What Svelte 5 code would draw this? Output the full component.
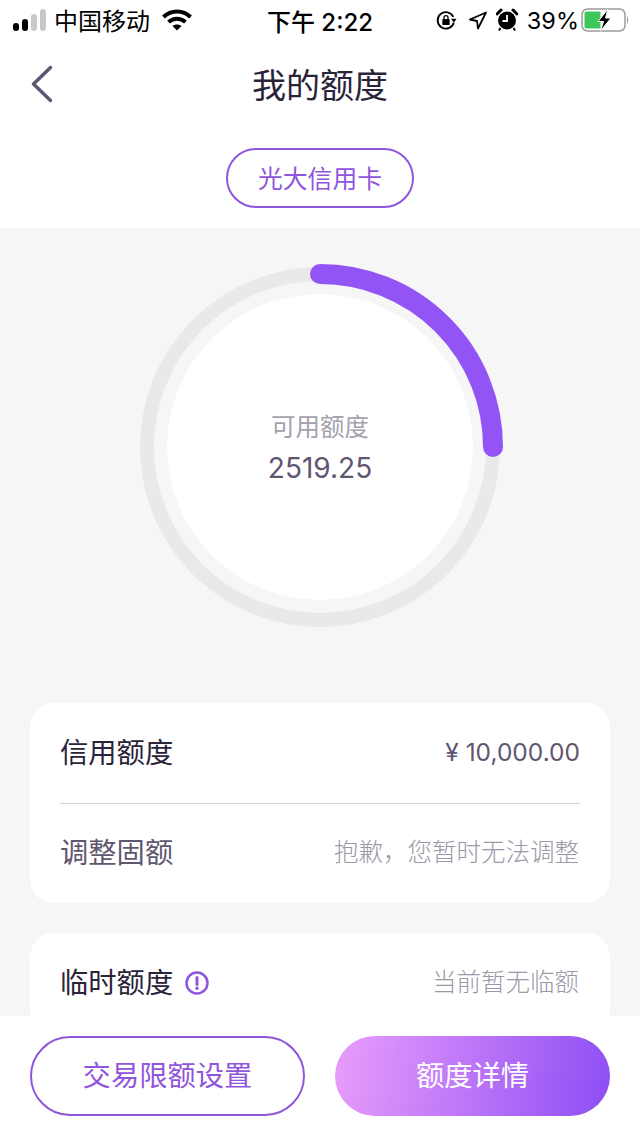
<script>
  let title = "我的额度";
  let cardName = "光大信用卡";
  let available = "2519.25";
</script>

<div class="page">
  <div class="statusbar">
    <div class="status-left">
      <div class="signal">
        <i class="on s1"></i><i class="on s2"></i><i class="s3"></i><i class="s4"></i>
      </div>
      <span class="carrier">中国移动</span>
      <svg class="wifi" width="30" height="24" viewBox="0 0 30 24">
        <path d="M1.500 9C9 1.500 21 1.500 28.500 9" fill="none" stroke="#000" stroke-width="4" />
        <path d="M6.500 14C11.500 9.500 18.500 9.500 23.500 14" fill="none" stroke="#000" stroke-width="4" />
        <path d="M10.500 18C13 16 17 16 19.500 18L15 22.500Z" fill="#000" />
      </svg>
    </div>
    <span class="time">下午 2:22</span>
    <div class="status-right">
      <svg class="lock" width="22" height="22" viewBox="0 0 24 24">
        <path d="M20 8.500A9 9 0 1 0 20.500 15" fill="none" stroke="#000" stroke-width="2" />
        <path d="M17.500 10.500L23.500 10.500L20.500 15Z" fill="#000" />
        <rect x="8" y="11" width="8" height="6.500" rx="1" fill="#000" />
        <path d="M9.800 11V9.500a2.200 2.200 0 0 1 4.400 0V11" fill="none" stroke="#000" stroke-width="1.400" />
      </svg>
      <svg width="20" height="20" viewBox="0 0 20 20">
        <path d="M18 2.500L10 18.500L9 11L2 9.500Z" fill="none" stroke="#000" stroke-width="1.800" stroke-linejoin="round" />
      </svg>
      <svg width="22" height="24" viewBox="0 0 22 24">
        <circle cx="11" cy="12.500" r="9" fill="#000" />
        <path d="M11 7V13H6.500" fill="none" stroke="#fff" stroke-width="1.800" />
        <path d="M1 6L5 2M21 6L17 2" stroke="#000" stroke-width="3" stroke-linecap="round" />
        <path d="M4.500 20L3 22.500M17.500 20L19 22.500" stroke="#000" stroke-width="2" />
      </svg>
      <span class="percent">39%</span>
      <svg class="battery" width="50" height="24" viewBox="0 0 50 24">
        <rect x="1" y="1" width="43" height="22" rx="5.500" fill="none" stroke="#9b9b9b" stroke-width="1.500" />
        <path d="M3.500 5.500a2 2 0 0 1 2-2h14v17h-14a2 2 0 0 1-2-2Z" fill="#3cc75a" />
        <path d="M46 8c1.500.5 1.500 7.500 0 8Z" fill="#9b9b9b" />
        <path d="M27 1L17 13.500H22.500L19.500 23L30 10H24.500Z" fill="#000" stroke="#fff" stroke-width="1" />
      </svg>
    </div>
  </div>

  <header class="nav">
    <svg class="back" width="24" height="40" viewBox="0 0 24 40">
      <path d="M20.500 3.500L3.500 20L20.500 36.500" fill="none" stroke="#5f566f" stroke-width="3.500" stroke-linecap="round" stroke-linejoin="round" />
    </svg>
    <h1>{title}</h1>
  </header>

  <div class="card-switch">
    <button class="pill">{cardName}</button>
  </div>

  <main class="content">
    <div class="gauge">
      <svg width="372" height="372" viewBox="0 0 372 372">
        <circle cx="186" cy="180" r="173" fill="none" stroke="#e9e9e9" stroke-width="14" />
        <circle cx="186" cy="180" r="153" fill="#fff" />
        <path d="M186 7A173 173 0 0 1 359 180" fill="none" stroke="#9254f5" stroke-width="20" stroke-linecap="round" />
      </svg>
      <div class="gauge-text">
        <span class="gauge-label">可用额度</span>
        <span class="gauge-value">{available}</span>
      </div>
    </div>

    <section class="card">
      <div class="row">
        <span class="name">信用额度</span>
        <span class="amount">¥ 10,000.00</span>
      </div>
      <div class="row">
        <span class="name muted">调整固额</span>
        <span class="note">抱歉，您暂时无法调整</span>
      </div>
    </section>

    <section class="card">
      <div class="row">
        <span class="name">
          临时额度
          <svg width="24" height="24" viewBox="0 0 24 24">
            <circle cx="12" cy="12" r="10.500" fill="none" stroke="#8f55dc" stroke-width="2.500" />
            <path d="M12 6.500V13.500" stroke="#8f55dc" stroke-width="3" stroke-linecap="round" />
            <circle cx="12" cy="17.300" r="1.700" fill="#8f55dc" />
          </svg>
        </span>
        <span class="note">当前暂无临额</span>
      </div>
    </section>
  </main>

  <footer class="actions">
    <button class="btn outline">交易限额设置</button>
    <button class="btn solid">额度详情</button>
  </footer>
</div>

<style>
  :global(body) {
    margin: 0;
    background: #fff;
  }

  .page {
    width: 640px;
    height: 1136px;
    display: flex;
    flex-direction: column;
    overflow: hidden;
    background: #fff;
    font-family: "Noto Sans CJK SC", "Noto Sans", sans-serif;
    color: #2a2438;
  }

  .statusbar {
    height: 40px;
    flex: none;
    position: relative;
    display: flex;
    align-items: center;
    justify-content: space-between;
    padding: 0 9px 0 13px;
    color: #000;
    font-size: 24px;
  }

  .status-left,
  .status-right {
    display: flex;
    align-items: center;
  }

  .signal {
    display: flex;
    align-items: flex-end;
    gap: 3px;
    height: 22px;
    margin-right: 8px;
  }

  .signal i {
    width: 6px;
    border-radius: 3px;
    background: #c8c8c8;
  }

  .signal .on {
    background: #000;
  }

  .s1 {
    height: 8px;
  }

  .s2 {
    height: 12px;
  }

  .s3 {
    height: 17px;
  }

  .s4 {
    height: 22px;
  }

  .carrier {
    line-height: 40px;
  }

  .wifi {
    margin-left: 12px;
  }

  .time {
    position: absolute;
    left: 0;
    right: 0;
    text-align: center;
    font-family: Inter, "Noto Sans CJK SC", sans-serif;
    font-weight: 500;
    font-size: 24px;
    pointer-events: none;
  }

  .status-right {
    gap: 8px;
  }

  .lock {
    margin-right: 3px;
  }

  .percent {
    font-family: Inter, "Liberation Sans", sans-serif;
    font-size: 23.500px;
    margin-left: 1px;
  }

  .battery {
    margin-left: -6px;
  }

  .nav {
    height: 88px;
    flex: none;
    position: relative;
    display: flex;
    align-items: center;
    justify-content: center;
  }

  .back {
    position: absolute;
    left: 30px;
    top: 24px;
  }

  h1 {
    margin: 0;
    font-size: 34px;
    font-weight: 400;
    line-height: 80px;
    color: #2a2438;
  }

  .card-switch {
    flex: none;
    height: 100px;
    box-sizing: border-box;
    padding-top: 20px;
    display: flex;
    justify-content: center;
  }

  .pill {
    width: 188px;
    height: 60px;
    border: 2px solid #8f55dc;
    border-radius: 30px;
    background: #fff;
    color: #8f55dc;
    font: inherit;
    font-size: 24.800px;
    padding: 0 0 2px;
  }

  .content {
    flex: 1;
    min-height: 0;
    overflow: hidden;
    background: #f6f6f6;
    padding: 39px 30px 0;
    display: flex;
    flex-direction: column;
    gap: 30px;
  }

  .gauge {
    display: grid;
    justify-items: center;
    margin-bottom: 40px;
    height: 366px;
    flex: none;
  }

  .gauge > * {
    grid-area: 1 / 1;
  }

  .gauge svg {
    overflow: visible;
  }

  .gauge-text {
    height: 363px;
    display: flex;
    flex-direction: column;
    align-items: center;
    justify-content: center;
    gap: 5px;
  }

  .gauge-label {
    font-size: 24.500px;
    color: #a5a1ad;
    line-height: 34px;
  }

  .gauge-value {
    font-family: Inter, "Liberation Sans", sans-serif;
    font-size: 28px;
    color: #5f566f;
    line-height: 40px;
  }

  .card {
    flex: none;
    background: #fff;
    border-radius: 24px;
    padding: 0 30px;
  }

  .row {
    height: 100px;
    box-sizing: border-box;
    padding-bottom: 2px;
    display: flex;
    align-items: center;
    justify-content: space-between;
  }

  .row + .row {
    border-top: 1px solid #d2d2d2;
  }

  .name {
    font-size: 28.300px;
    color: #2a2438;
    display: flex;
    align-items: center;
    gap: 12px;
    padding-bottom: 4px;
  }

  .name svg {
    margin-top: 5px;
  }

  .muted {
    color: #5f566f;
  }

  .amount {
    font-family: Inter, "Liberation Sans", sans-serif;
    font-size: 24.500px;
    color: #5f566f;
  }

  .note {
    font-size: 24.500px;
    font-weight: 300;
    color: #9c98a6;
    padding-bottom: 4px;
    margin-right: 1px;
  }

  .actions {
    flex: none;
    height: 120px;
    box-sizing: border-box;
    background: #fff;
    padding: 20px 30px;
    display: flex;
    gap: 30px;
  }

  .btn {
    flex: 0 0 275px;
    height: 80px;
    border-radius: 40px;
    font: inherit;
    font-size: 28.300px;
    padding: 0 0 6px;
  }

  .outline {
    background: #fff;
    border: 2px solid #8f55dc;
    color: #8f55dc;
  }

  .solid {
    border: 0;
    color: #fff;
    background: linear-gradient(100deg, #e99dfb, #8d4df4);
  }
</style>
